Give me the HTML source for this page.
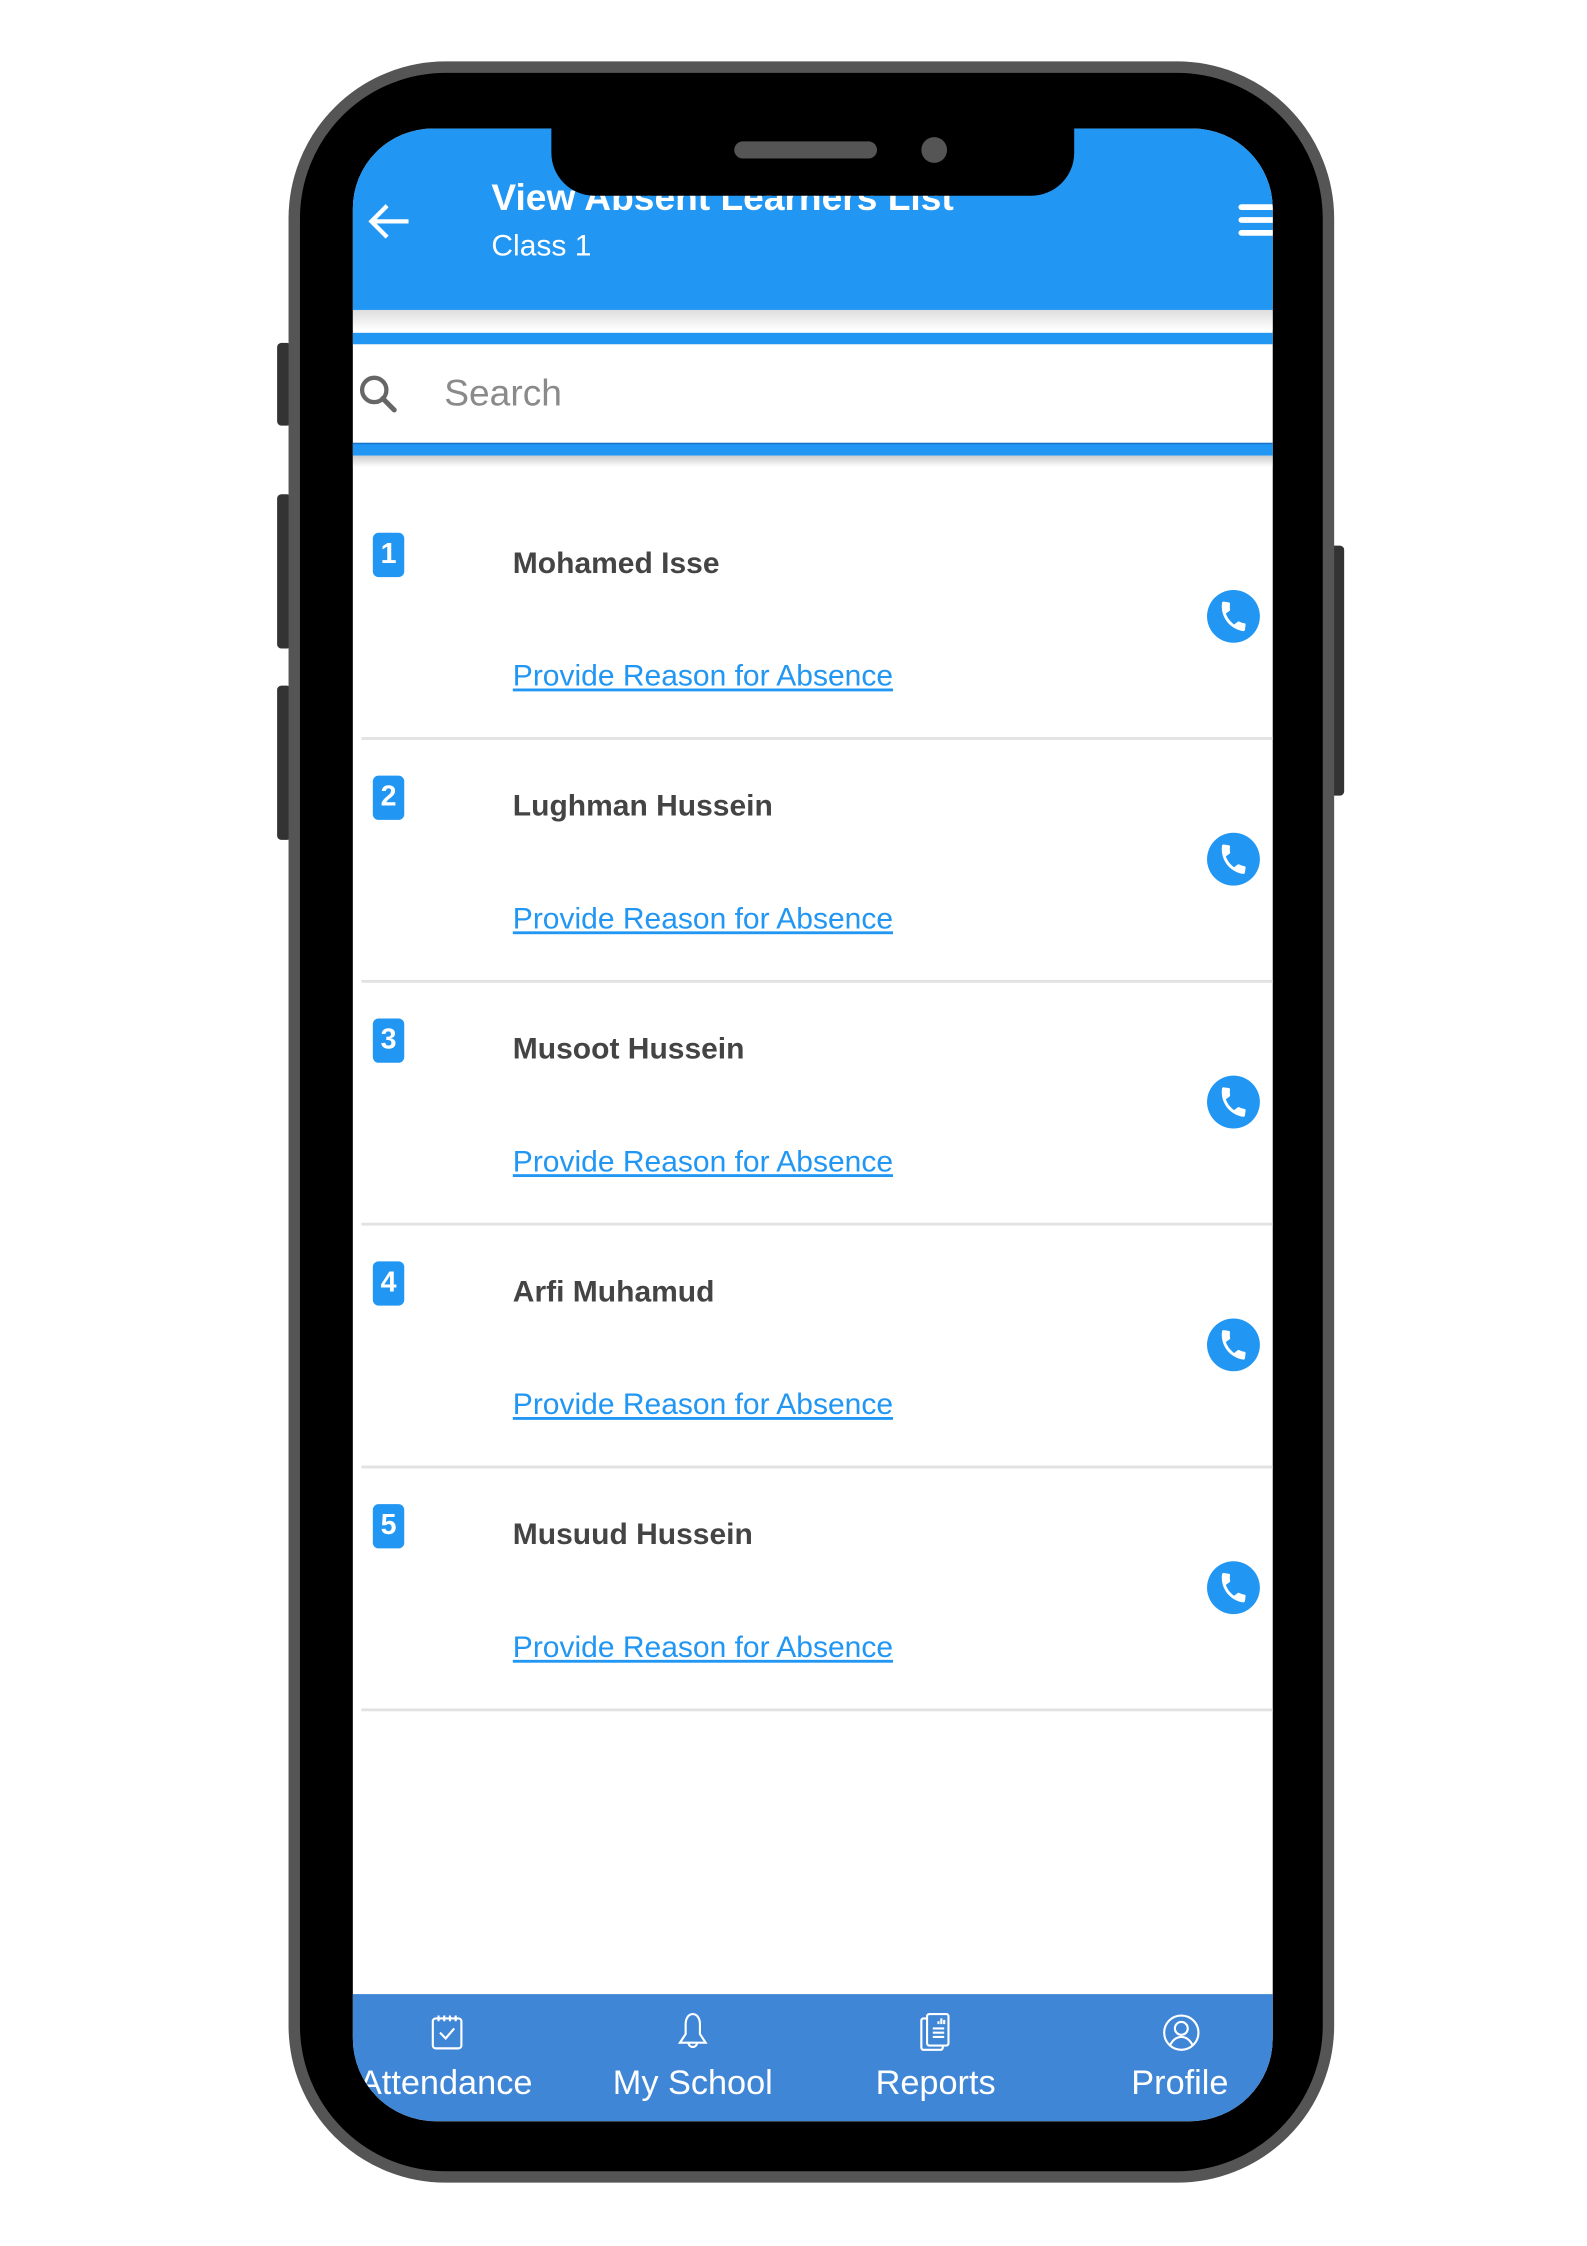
<!DOCTYPE html>
<html><head><meta charset="utf-8">
<style>
html,body{margin:0;padding:0;background:#fff;width:1587px;height:2245px;overflow:hidden}
#w{position:absolute;left:0;top:0;width:1111px;height:1572px;transform:scale(1.42844);transform-origin:0 0;font-family:"Liberation Sans",sans-serif}
.abs{position:absolute}
.btn{position:absolute;background:#333;border-radius:3px}
#phone{left:202px;top:43px;width:732px;height:1485px;background:#000;border:8px solid #555;box-sizing:border-box;border-radius:110px}
#screen{left:247px;top:90px;width:644px;height:1395px;background:#fff;border-radius:56px 56px 58px 58px;overflow:hidden}
#hdr{left:0;top:0;width:644px;height:127px;background:#2196F3}
.item{position:absolute;left:0;width:644px;height:170px}
.badge{position:absolute;left:14px;top:26px;width:22px;height:31px;background:#2196F3;border-radius:4px;color:#fff;font-size:20px;font-weight:bold;text-align:center;line-height:31px}
.name{position:absolute;left:112px;top:36px;font-size:21px;font-weight:bold;color:#444}
.link{position:absolute;left:112px;top:115px;font-size:21px;color:#2196F3;text-decoration:underline}
.call{position:absolute;left:598px;top:66px;width:37px;height:37px;border-radius:50%;background:#2196F3}
.div{position:absolute;left:6px;top:169px;width:640px;height:2px;background:#e2e2e2}
#nav{left:0;top:1306px;width:644px;height:89px;background:#3F86D6}
.lab{position:absolute;top:49px;font-size:24px;color:#fff;width:170px;text-align:center}
</style></head><body><div id="w">
<div class="btn" style="left:194px;top:240px;width:10px;height:58px"></div>
<div class="btn" style="left:194px;top:346px;width:10px;height:108px"></div>
<div class="btn" style="left:194px;top:480px;width:10px;height:108px"></div>
<div class="btn" style="left:931px;top:382px;width:10px;height:175px"></div>
<div id="phone" class="abs"></div>
<div id="screen" class="abs">
 <div id="hdr" class="abs">
  <svg class="abs" style="left:10px;top:51px" width="32" height="28" viewBox="0 0 32 28"><path d="M29 14H4M14 3L3 14l11 11" stroke="#fff" stroke-width="3" fill="none"/></svg>
  <div class="abs" style="left:97px;top:33px;font-size:26px;font-weight:bold;color:#fff;white-space:nowrap">View Absent Learners List</div>
  <div class="abs" style="left:97px;top:71px;font-size:21px;color:#fff">Class 1</div>
  <div class="abs" style="left:620px;top:53px;width:30px;height:4px;background:#fff;border-radius:2px"></div>
  <div class="abs" style="left:620px;top:62px;width:30px;height:4px;background:#fff;border-radius:2px"></div>
  <div class="abs" style="left:620px;top:71px;width:30px;height:4px;background:#fff;border-radius:2px"></div>
 </div>
 <div class="abs" style="left:0;top:127px;width:644px;height:14px;background:linear-gradient(#ddd,#fff)"></div>
 <div class="abs" style="left:0;top:143px;width:644px;height:8px;background:#2196F3"></div>
 <svg class="abs" style="left:4px;top:172px" width="28" height="28" viewBox="0 0 28 28"><circle cx="11" cy="11" r="8.5" stroke="#666" stroke-width="3" fill="none"/><path d="M17 17l8 8" stroke="#666" stroke-width="3.5" stroke-linecap="round"/></svg>
 <div class="abs" style="left:64px;top:170px;font-size:26px;color:#8a8a8a">Search</div>
 <div class="abs" style="left:0;top:220px;width:644px;height:8px;background:#2196F3;border-top:1px solid #1a73c8"></div>
 <div class="abs" style="left:0;top:229px;width:644px;height:8px;background:linear-gradient(#ccc,#fff)"></div>

 <div class="item" style="top:257px"><div class="badge">1</div><div class="name">Mohamed Isse</div><div class="link">Provide Reason for Absence</div><div class="call"><svg width="37" height="37" viewBox="-6 -6 36 36"><path fill="#fff" d="M6.6 10.8c1.4 2.8 3.8 5.1 6.6 6.6l2.2-2.2c.3-.3.7-.4 1-.2 1.1.4 2.3.6 3.6.6.6 0 1 .4 1 1V20c0 .6-.4 1-1 1C10.6 21 3 13.4 3 4c0-.6.4-1 1-1h3.5c.6 0 1 .4 1 1 0 1.3.2 2.5.6 3.6.1.3 0 .7-.2 1z" transform="rotate(8 12 12)"/></svg></div><div class="div"></div></div>
 <div class="item" style="top:427px"><div class="badge">2</div><div class="name">Lughman Hussein</div><div class="link">Provide Reason for Absence</div><div class="call"><svg width="37" height="37" viewBox="-6 -6 36 36"><path fill="#fff" d="M6.6 10.8c1.4 2.8 3.8 5.1 6.6 6.6l2.2-2.2c.3-.3.7-.4 1-.2 1.1.4 2.3.6 3.6.6.6 0 1 .4 1 1V20c0 .6-.4 1-1 1C10.6 21 3 13.4 3 4c0-.6.4-1 1-1h3.5c.6 0 1 .4 1 1 0 1.3.2 2.5.6 3.6.1.3 0 .7-.2 1z" transform="rotate(8 12 12)"/></svg></div><div class="div"></div></div>
 <div class="item" style="top:597px"><div class="badge">3</div><div class="name">Musoot Hussein</div><div class="link">Provide Reason for Absence</div><div class="call"><svg width="37" height="37" viewBox="-6 -6 36 36"><path fill="#fff" d="M6.6 10.8c1.4 2.8 3.8 5.1 6.6 6.6l2.2-2.2c.3-.3.7-.4 1-.2 1.1.4 2.3.6 3.6.6.6 0 1 .4 1 1V20c0 .6-.4 1-1 1C10.6 21 3 13.4 3 4c0-.6.4-1 1-1h3.5c.6 0 1 .4 1 1 0 1.3.2 2.5.6 3.6.1.3 0 .7-.2 1z" transform="rotate(8 12 12)"/></svg></div><div class="div"></div></div>
 <div class="item" style="top:767px"><div class="badge">4</div><div class="name">Arfi Muhamud</div><div class="link">Provide Reason for Absence</div><div class="call"><svg width="37" height="37" viewBox="-6 -6 36 36"><path fill="#fff" d="M6.6 10.8c1.4 2.8 3.8 5.1 6.6 6.6l2.2-2.2c.3-.3.7-.4 1-.2 1.1.4 2.3.6 3.6.6.6 0 1 .4 1 1V20c0 .6-.4 1-1 1C10.6 21 3 13.4 3 4c0-.6.4-1 1-1h3.5c.6 0 1 .4 1 1 0 1.3.2 2.5.6 3.6.1.3 0 .7-.2 1z" transform="rotate(8 12 12)"/></svg></div><div class="div"></div></div>
 <div class="item" style="top:937px"><div class="badge">5</div><div class="name">Musuud Hussein</div><div class="link">Provide Reason for Absence</div><div class="call"><svg width="37" height="37" viewBox="-6 -6 36 36"><path fill="#fff" d="M6.6 10.8c1.4 2.8 3.8 5.1 6.6 6.6l2.2-2.2c.3-.3.7-.4 1-.2 1.1.4 2.3.6 3.6.6.6 0 1 .4 1 1V20c0 .6-.4 1-1 1C10.6 21 3 13.4 3 4c0-.6.4-1 1-1h3.5c.6 0 1 .4 1 1 0 1.3.2 2.5.6 3.6.1.3 0 .7-.2 1z" transform="rotate(8 12 12)"/></svg></div><div class="div"></div></div>

 <div id="nav" class="abs">
  <svg class="abs" style="left:54px;top:14px" width="24" height="26" viewBox="0 0 24 26" fill="none" stroke="#fff" stroke-width="1.5"><rect x="2" y="3" width="20" height="21" rx="2"/><path d="M6 1v4M10 1v4M14 1v4M18 1v4M7 13l4 4 6-7"/></svg>
  <svg class="abs" style="left:226px;top:12px" width="24" height="30" viewBox="0 0 24 30" fill="none" stroke="#fff" stroke-width="1.5"><path d="M12 2c-3 0-5 3-5 7v7l-4 6h18l-4-6V9c0-4-2-7-5-7zM9 22a3 3 0 006 0"/></svg>
  <svg class="abs" style="left:396px;top:12px" width="24" height="30" viewBox="0 0 24 30" fill="none" stroke="#fff" stroke-width="1.5"><rect x="2" y="5" width="15" height="22" rx="1.5"/><rect x="6" y="2" width="15" height="22" rx="1.5" fill="#3F86D6"/><path d="M10 12h8M10 15h8M10 18h8M14 9V7M16 9V5M18 9V6"/></svg>
  <svg class="abs" style="left:566px;top:13px" width="28" height="28" viewBox="0 0 28 28" fill="none" stroke="#fff" stroke-width="1.5"><circle cx="14" cy="14" r="12"/><circle cx="14" cy="11" r="4.5"/><path d="M6 23c2-4 5-6 8-6s6 2 8 6"/></svg>
  <div class="lab" style="left:-20px">Attendance</div>
  <div class="lab" style="left:153px">My School</div>
  <div class="lab" style="left:323px">Reports</div>
  <div class="lab" style="left:494px">Profile</div>
 </div>
</div>
<div class="abs" style="left:386px;top:86px;width:366px;height:51px;background:#000;border-radius:0 0 30px 30px"></div>
<div class="abs" style="left:514px;top:99px;width:100px;height:12px;background:#555;border-radius:6px"></div>
<div class="abs" style="left:645px;top:96px;width:18px;height:18px;background:#555;border-radius:50%"></div>
</div></body></html>
